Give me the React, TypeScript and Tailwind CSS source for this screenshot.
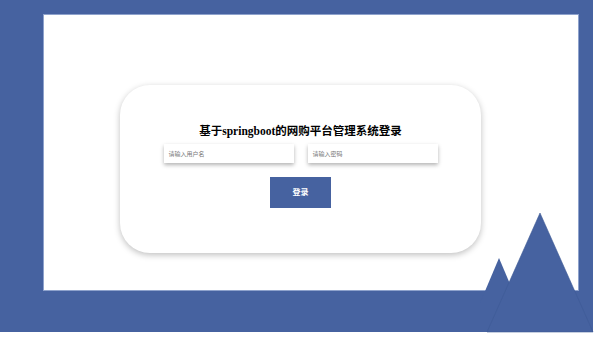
import React from "react";

export default function App() {
  return (
    <div className="w-[600px] h-[338px] bg-white overflow-hidden relative">
      <div className="w-[593px] h-[332px] bg-[#4662a0] pl-[43px] pt-[14px] pr-[14px] pb-[41px]">
        <div className="w-full h-full bg-white border border-[#8ea2cc] pt-[70px] pl-[76px]">
          <div className="w-[361px] h-[168px] bg-white rounded-[30px] shadow-[0_2px_6px_rgba(0,0,0,0.25)] flex flex-col items-center pt-[38px]">
            <h1
              className="text-[11.5px] font-bold text-black leading-[16px]"
              style={{ fontFamily: '"Liberation Serif", "Noto Sans CJK SC", serif' }}
            >
              基于springboot的网购平台管理系统登录
            </h1>
            <div className="flex gap-[14px] mt-[5px]">
              <div className="w-[130px] h-[19px] bg-white shadow-[0_2px_4px_rgba(0,0,0,0.3)] flex items-center pl-[5px]">
                <span className="text-[6px] text-[#777]" style={{ fontFamily: '"Noto Sans CJK SC", sans-serif' }}>
                  请输入用户名
                </span>
              </div>
              <div className="w-[130px] h-[19px] bg-white shadow-[0_2px_4px_rgba(0,0,0,0.3)] flex items-center pl-[5px]">
                <span className="text-[6px] text-[#777]" style={{ fontFamily: '"Noto Sans CJK SC", sans-serif' }}>
                  请输入密码
                </span>
              </div>
            </div>
            <button
              className="mt-[14px] w-[61px] h-[31px] bg-[#4662a0] text-white text-[8px] font-bold flex items-center justify-center"
              style={{ fontFamily: '"Liberation Serif", "Noto Sans CJK SC", serif' }}
            >
              登录
            </button>
          </div>
        </div>
      </div>
      <svg className="absolute left-0 top-0 pointer-events-none" width="600" height="338" viewBox="0 0 600 338">
        <polygon points="499,258 480,303 518,303" fill="#4662a0" />
        <polygon points="540,213 487,332 593,332" fill="#4662a0" stroke="#3e5a96" strokeWidth="0.6" />
      </svg>
    </div>
  );
}
